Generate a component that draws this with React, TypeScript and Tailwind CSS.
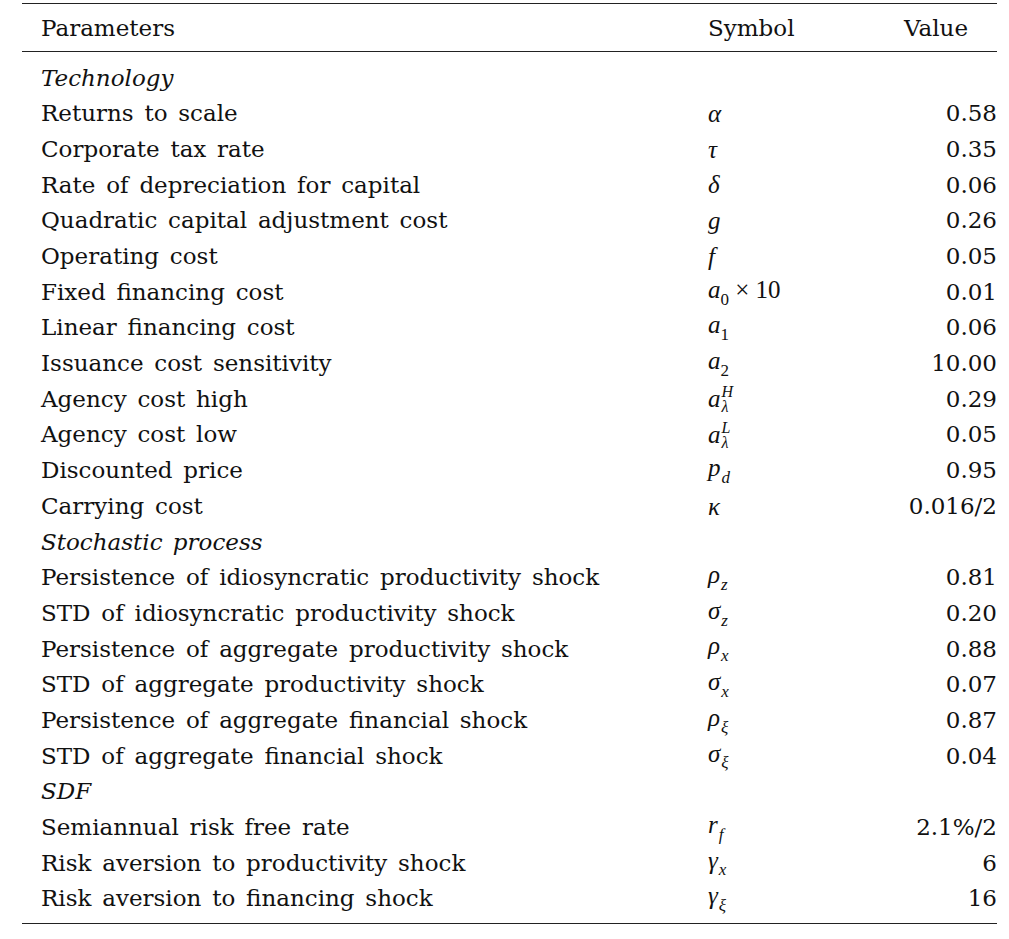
import React from "react";

type Row =
  | { kind: "section"; label: string }
  | { kind: "param"; label: string; sym: React.ReactNode; value: string };

const M = ({ children }: { children: React.ReactNode }) => (
  <span className="italic [font-family:'Liberation_Serif',serif] text-[25px]">{children}</span>
);
const Sub = ({ children, upright }: { children: React.ReactNode; upright?: boolean }) => (
  <span
    className={
      upright
        ? "[font-family:'Liberation_Serif',serif] text-[17px] [vertical-align:-0.4em]"
        : "italic [font-family:'Liberation_Serif',serif] text-[17px] [vertical-align:-0.4em] ml-[1px]"
    }
  >
    {children}
  </span>
);
const SupSub = ({ sup, sub }: { sup: string; sub: string }) => (
  <span className="inline-flex flex-col leading-[15px] ml-[1px] [font-family:'Liberation_Serif',serif] italic text-[16px] [vertical-align:10px]">
    <span>{sup}</span>
    <span>{sub}</span>
  </span>
);

const rows: Row[] = [
  { kind: "section", label: "Technology" },
  { kind: "param", label: "Returns to scale", sym: <M>α</M>, value: "0.58" },
  { kind: "param", label: "Corporate tax rate", sym: <M>τ</M>, value: "0.35" },
  { kind: "param", label: "Rate of depreciation for capital", sym: <M>δ</M>, value: "0.06" },
  { kind: "param", label: "Quadratic capital adjustment cost", sym: <M>g</M>, value: "0.26" },
  { kind: "param", label: "Operating cost", sym: <M>f</M>, value: "0.05" },
  {
    kind: "param",
    label: "Fixed financing cost",
    sym: (
      <>
        <M>a</M>
        <Sub upright>0</Sub>
        <span className="[font-family:'Liberation_Serif',serif] text-[25px]"> × 10</span>
      </>
    ),
    value: "0.01",
  },
  { kind: "param", label: "Linear financing cost", sym: <><M>a</M><Sub upright>1</Sub></>, value: "0.06" },
  { kind: "param", label: "Issuance cost sensitivity", sym: <><M>a</M><Sub upright>2</Sub></>, value: "10.00" },
  { kind: "param", label: "Agency cost high", sym: <><M>a</M><SupSub sup="H" sub="λ" /></>, value: "0.29" },
  { kind: "param", label: "Agency cost low", sym: <><M>a</M><SupSub sup="L" sub="λ" /></>, value: "0.05" },
  { kind: "param", label: "Discounted price", sym: <><M>p</M><Sub>d</Sub></>, value: "0.95" },
  { kind: "param", label: "Carrying cost", sym: <M>κ</M>, value: "0.016/2" },
  { kind: "section", label: "Stochastic process" },
  { kind: "param", label: "Persistence of idiosyncratic productivity shock", sym: <><M>ρ</M><Sub>z</Sub></>, value: "0.81" },
  { kind: "param", label: "STD of idiosyncratic productivity shock", sym: <><M>σ</M><Sub>z</Sub></>, value: "0.20" },
  { kind: "param", label: "Persistence of aggregate productivity shock", sym: <><M>ρ</M><Sub>x</Sub></>, value: "0.88" },
  { kind: "param", label: "STD of aggregate productivity shock", sym: <><M>σ</M><Sub>x</Sub></>, value: "0.07" },
  { kind: "param", label: "Persistence of aggregate financial shock", sym: <><M>ρ</M><Sub>ξ</Sub></>, value: "0.87" },
  { kind: "param", label: "STD of aggregate financial shock", sym: <><M>σ</M><Sub>ξ</Sub></>, value: "0.04" },
  { kind: "section", label: "SDF" },
  { kind: "param", label: "Semiannual risk free rate", sym: <><M>r</M><Sub>f</Sub></>, value: "2.1%/2" },
  { kind: "param", label: "Risk aversion to productivity shock", sym: <><M>γ</M><Sub>x</Sub></>, value: "6" },
  { kind: "param", label: "Risk aversion to financing shock", sym: <><M>γ</M><Sub>ξ</Sub></>, value: "16" },
];

export default function App() {
  return (
    <div className="w-[1009px] h-[939px] bg-white pt-[3px] text-[#111] [font-family:'DejaVu_Serif',serif] text-[23px]">
      <div className="ml-[22px] w-[975px]">
        <div className="border-t-[1.5px] border-b-[1.5px] border-[#222] h-[49px] grid grid-cols-[686px_1fr_auto] items-center pt-[2px]">
          <div className="pl-[19px]">Parameters</div>
          <div>Symbol</div>
          <div className="pr-[29px]">Value</div>
        </div>
        <div className="pt-[8px] pb-[6px] border-b-[1.5px] border-[#222]">
          {rows.map((r, i) =>
            r.kind === "section" ? (
              <div key={i} className="h-[35.7px] flex items-center pl-[19px] italic [word-spacing:3px]">
                {r.label}
              </div>
            ) : (
              <div key={i} className="h-[35.7px] grid grid-cols-[686px_1fr_auto] items-center">
                <div className="pl-[19px] [word-spacing:3.5px] whitespace-nowrap">{r.label}</div>
                <div className="whitespace-nowrap leading-none">{r.sym}</div>
                <div className="whitespace-nowrap text-right">{r.value}</div>
              </div>
            )
          )}
        </div>
      </div>
    </div>
  );
}
